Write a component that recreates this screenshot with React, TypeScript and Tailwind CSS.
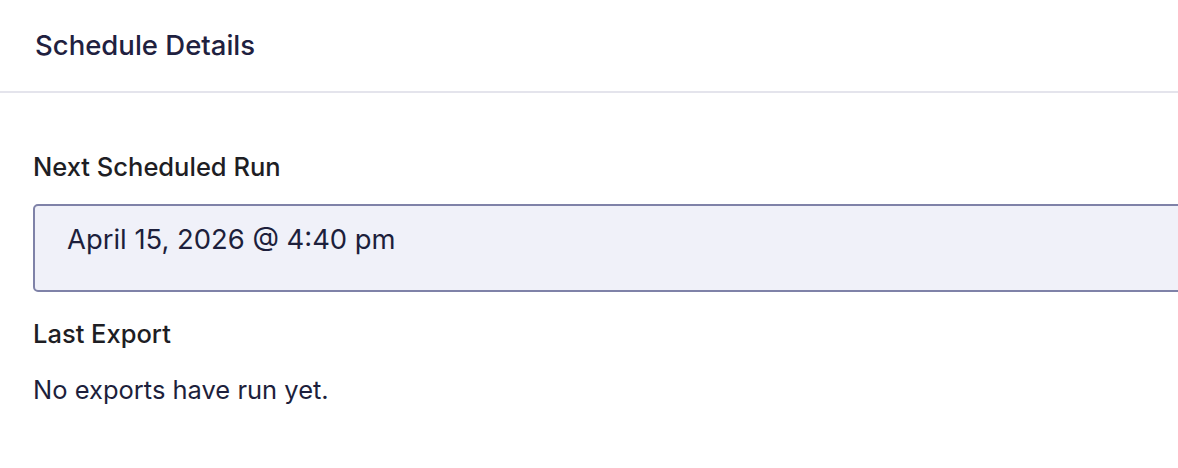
import React from 'react';

const ScheduleDetails = () => {
  return (
    <div className="w-[1178px] h-[468px] overflow-hidden bg-white font-['Inter','Noto_Sans',sans-serif] antialiased">
      <div className="h-[93px] pl-[35px] pt-[28px] border-b-2 border-[#e4e4ec]">
        <h2 className="text-[27.5px] leading-[34px] font-medium text-[#1f2140]">Schedule Details</h2>
      </div>

      <div className="pl-[33px] pt-[58px]">
        <div className="text-[25.5px] leading-[32px] font-medium text-[#1e1e24]">Next Scheduled Run</div>

        <div className="mt-[21px] -mr-2 h-[88px] rounded-[5px] border-2 border-[#7f82a8] bg-[#f0f1f9] pl-[32px] pt-[16px]">
          <span className="text-[27.4px] leading-[34px] text-[#1d1f3c]">April 15, 2026 @ 4:40 pm</span>
        </div>

        <div className="mt-[26px] text-[25.5px] leading-[32px] font-medium text-[#1e1e24]">Last Export</div>
        <p className="mt-[24px] text-[25.5px] leading-[32px] text-[#1d1f3c]">No exports have run yet.</p>
      </div>
    </div>
  );
};

export default function App() {
  return <ScheduleDetails />;
}
